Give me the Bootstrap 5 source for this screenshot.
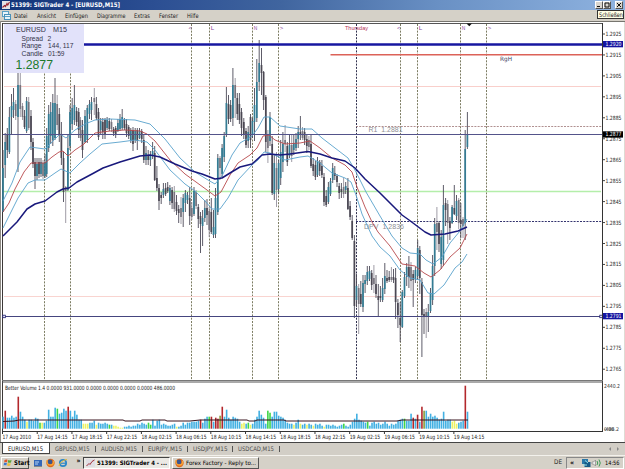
<!DOCTYPE html>
<html lang="de">
<head>
  <meta charset="UTF-8" />
  <meta name="viewport" content="width=device-width, initial-scale=1.0"/>
  <title>SIGTrader 4 - [EURUSD,M15]</title>

  <!-- Bootstrap 5 -->
  <link href="https://cdn.jsdelivr.net/npm/bootstrap@5.3.3/dist/css/bootstrap.min.css" rel="stylesheet">
  <script src="https://cdn.jsdelivr.net/npm/bootstrap@5.3.3/dist/js/bootstrap.bundle.min.js"></script>

  <style>
    body {
      width: 625px;
      height: 469px;
      overflow: hidden;
      background: #d5d1c8;
      color: #222;
      font-family: "DejaVu Sans Condensed", "DejaVu Sans", sans-serif;
      font-size: 5.7px;
      line-height: 1;
      white-space: nowrap;
    }

    svg {
      display: block;
      flex: none;
      overflow: visible;
    }

    .title-bar {
      height: 10px;
      padding: 0 2px;
      background: linear-gradient(90deg, #123378 0%, #2c4f93 25%, #40659f 45%, #6990c4 70%, #8fb3e0 100%);
      color: #fff;
      font-size: 6.3px;
      font-weight: bold;
    }

    .win-btn {
      width: 8px;
      height: 7.5px;
      background: #d8d4cc;
      border: 1px solid;
      border-color: #fff #555 #555 #fff;
    }

    .menu-bar {
      height: 11px;
      padding-left: 2px;
      background: #d5d1c8;
    }

    .menu-items {
      gap: 9px;
      margin-left: 3px;
    }

    .close-tip {
      right: 1px;
      top: 0;
      width: 27px;
      height: 9px;
      background: #ffffe6;
      border: 1px solid #333;
      color: #222;
      z-index: 2;
    }

    .tab-row {
      height: 13px;
      border-top: 1px solid #444;
      background: #d2cec6;
      color: #4c4c4c;
      padding-left: 2px;
    }

    .chart-tab {
      height: 11px;
      padding: 0 5px;
    }

    .chart-tab.active {
      width: 48px;
      background: #fff;
      color: #111;
      border: 1px solid #444;
      border-top: 0;
    }

    .tab-sep {
      width: 1px;
      height: 6px;
      background: #555;
    }

    .task-bar {
      height: 14px;
      border-top: 1px solid #f3f1ec;
      padding: 0 1px;
      background: #d5d1c8;
    }

    .task-btn {
      height: 12px;
      border: 1px solid;
      border-color: #fff #555 #555 #fff;
      padding: 0 2px;
      gap: 2px;
      color: #111;
    }

    .task-btn.pressed {
      border-color: #444 #fff #fff #444;
      background: #ebe9e4;
      font-weight: bold;
    }

    .tray {
      width: 58px;
      height: 12px;
      border: 1px solid;
      border-color: #888 #fff #fff #888;
      gap: 4px;
      padding: 0 3px;
    }
  </style>
</head>
<body class="d-flex flex-column">

  <!-- Titelleiste -->
  <div class="title-bar d-flex align-items-center">
    <svg width="8" height="8" viewBox="0 0 8 8"><rect width="8" height="8" fill="#e4e2e6"/><path d="M0.5 6.5L2.5 4.5 3.5 5.5 5 2.5 5.8 4 7.5 1" fill="none" stroke="#9c2430" stroke-width="1.1"/></svg>
    <svg width="114" height="10"><text x="1" y="7.2" textLength="109" lengthAdjust="spacingAndGlyphs" fill="#fff">51399: SIGTrader 4 - [EURUSD,M15]</text></svg>
    <div class="ms-auto d-flex">
      <div class="win-btn"><svg width="6" height="6"><path d="M1 4.5H4" stroke="#111"/></svg></div>
      <div class="win-btn"><svg width="6" height="6"><path d="M1 1H5V5H1Z" fill="none" stroke="#111"/></svg></div>
      <div class="win-btn ms-1"><svg width="6" height="6"><path d="M1 1L5 5M5 1L1 5" stroke="#111"/></svg></div>
    </div>
  </div>

  <!-- Menü -->
  <div class="menu-bar d-flex align-items-center position-relative">
    <svg width="9" height="9" viewBox="0 0 9 9"><rect x="0.5" y="0.5" width="6" height="5" fill="#e9f5fb" stroke="#5ba0c4"/><rect x="2.5" y="3.5" width="6" height="5" fill="#e9f5fb" stroke="#4a90b8"/><path d="M3 5.5H8" stroke="#5ba0c4"/></svg>
    <div class="menu-items d-flex" id="menuItems"></div>
    <div class="close-tip position-absolute d-flex align-items-center justify-content-center" id="closeTip"></div>
  </div>

  <!-- Chart -->
  <svg id="chart" width="625" height="421" viewBox="0 21 625 421"></svg>

  <!-- Chart-Tabs -->
  <div class="tab-row d-flex align-items-start" id="tabRow"></div>

  <!-- Taskleiste -->
  <div class="task-bar d-flex align-items-center">
    <div class="task-btn d-flex align-items-center fw-bold" style="width: 28px">
      <svg width="8" height="9" viewBox="0 0 8 9"><path d="M0.5 2Q2 1 3.5 1.8L3 4.3Q1.7 3.6 0.2 4.4Z" fill="#e2562a"/><path d="M4.2 2Q5.8 2.8 7.6 2L7 4.5Q5.4 5.1 3.8 4.4Z" fill="#5aa53c"/><path d="M0 5Q1.5 4.3 2.9 5L2.3 7.4Q1 6.8-0.4 7.4Z" fill="#3c76cc"/><path d="M3.6 5.1Q5.2 5.8 6.8 5.2L6.2 7.6Q4.6 8.2 3 7.5Z" fill="#ecbd35"/></svg>
      <svg width="16" height="10"><text x="0" y="7.4" font-size="6.4" textLength="15.5" lengthAdjust="spacingAndGlyphs">Start</text></svg>
    </div>
    <svg width="54" height="12" viewBox="0 0 54 12">
      <rect x="5" y="3" width="8" height="6" fill="#3468b8"/><path d="M6 5H10M6 7H9" stroke="#b7d5f5"/><path d="M5 9.5H13" stroke="#86888c"/>
      <g id="firefox"><circle cx="21.5" cy="6" r="4.2" fill="#df6a1c"/><circle cx="21" cy="5" r="2.4" fill="#3a568f"/><path d="M18 3Q17.5 8 21.5 8Q25 8 24.5 4" fill="none" stroke="#f6a63a" stroke-width="1.3"/></g>
      <circle cx="34" cy="6" r="3.2" fill="none" stroke="#2b87c9" stroke-width="1.7"/><path d="M31.5 6.2H37" stroke="#2b87c9" stroke-width="1.2"/><path d="M30 9Q31 4 38 2.3" fill="none" stroke="#e5b93b"/>
      <text x="47.500" y="6" font-size="7" font-weight="bold">»</text>
    </svg>
    <div class="task-btn pressed d-flex align-items-center" style="width: 87px">
      <svg width="9" height="8" viewBox="0 0 9 8"><rect width="9" height="8" fill="#e0dfe4"/><path d="M0.5 7L3 4.5 4 5.5 6 2.5 8.5 1" fill="none" stroke="#a4303a"/></svg>
      <svg width="72" height="10"><text x="0" y="7.2" font-size="6" textLength="70" lengthAdjust="spacingAndGlyphs">51399: SIGTrader 4 - ...</text></svg>
    </div>
    <div class="task-btn d-flex align-items-center" style="width: 87px; margin-left: 2px">
      <svg width="9" height="10" viewBox="17 1 9 10"><use href="#firefox"/></svg>
      <svg width="72" height="10"><text x="0" y="7.2" font-size="6" textLength="70" lengthAdjust="spacingAndGlyphs">Forex Factory - Reply to...</text></svg>
    </div>
    <span class="ms-auto" style="font-size: 6.3px">DE</span>
    <div class="tray d-flex align-items-center" style="margin-left: 4px">
      <svg width="31" height="10" viewBox="0 0 31 10"><text x="0" y="7" font-size="7" font-weight="bold">«</text><rect x="12" y="1" width="6" height="5" fill="#2a78a8"/><rect x="14.5" y="4" width="6" height="5" fill="#175a86"/><path d="M13 7H17M15 2.5L18 5" stroke="#8fe0e8"/><path d="M22 4H23.5L25.5 2V8L23.5 6H22Z" fill="#eee" stroke="#777" stroke-width="0.6"/><path d="M27 3Q28.5 5 27 7M29 1.5Q31.5 5 29 8.5" fill="none" stroke="#3d9b55"/></svg>
      <svg width="16" height="10"><text x="0" y="7" font-size="6" textLength="14.5" lengthAdjust="spacingAndGlyphs">14:56</text></svg>
    </div>
  </div>

  <script>
    const label = (text, width) =>
      `<svg width="${width}" height="9"><text x="0" y="6.7" fill="currentColor" font-size="6.2" textLength="${width}" lengthAdjust="spacingAndGlyphs">${text}</text></svg>`;

    const menu = [['Datei', 13.5], ['Ansicht', 19], ['Einfügen', 23], ['Diagramme', 28.5], ['Extras', 16], ['Fenster', 19], ['Hilfe', 11.5]];
    document.getElementById('menuItems').innerHTML = menu.map(m => label(m[0], m[1])).join('');
    document.getElementById('closeTip').innerHTML = label('Schließen', 24);

    const tabs = [['EURUSD,M15', 35], ['GBPUSD,M15', 34.5], ['AUDUSD,M15', 36], ['EURJPY,M15', 34], ['USDJPY,M15', 34.5], ['USDCAD,M15', 36]];
    document.getElementById('tabRow').innerHTML = tabs.map((tab, i) =>
      `<div class="chart-tab d-flex align-items-center ${i === 0 ? 'active' : ''}">${label(tab[0], tab[1])}</div>` +
      (i > 0 ? '<div class="tab-sep align-self-center"></div>' : '')).join('') +
      '<svg class="ms-auto me-1 align-self-center" width="14" height="8"><path d="M4 2L2 4 4 6ZM10 2L12 4 10 6Z" fill="#888"/></svg>';

    // Kerzen: x, Hoch, Tief, Körper oben, Körper unten, Typ (u = steigend, d = fallend, g = grau)
    const candles = `
      3 150 212 168 212 u;5.2 133 178 142 165 u;7.3 128 158 134 150 d;9.4 107 154 117 152 u;11.5 94 135 106 117 u;13.5 88 118 102 110 u;15.7 100 120 104 116 g;18 73 172 85 117 u;20.3 73 117 85 109 g;22.5 103 120 106 117 g;24.5 110 129 116 127 d;26.6 97 133 101 131 u;28.7 97 130 102 128 g;31 110 150 116 142 d;33 138 168 142 164 d;35 158 189 162 176 d;37 158 180 164 176 u;39 158 178 162 174 d;41 158 177 162 174 u;43 160 179 163 176 g;45 154 178 162 176 u;46.7 128 177 136 174 u;48.7 105 152 114 148 u;50.7 102 144 112 136 u;52.8 94 146 103 140 u;55 78 140 103 138 u;57.2 95 130 104 125 g;59.3 108 142 114 134 d;61.4 122 165 134 158 d;63.5 152 202 158 192 d;65.7 186 223 187 191 g;67.9 134 191 148 190 u;70 105 150 112 146 u;72.2 98 130 108 124 u;74.4 85 125 105 120 u;76.6 107 126 111 122 d;78.7 108 138 112 130 d;80.5 117 141 120 138 g;82.5 120 158 130 150 d;85 110 143 116 142 u;87.3 105 143 108 140 u;89.5 100 119 104 114 u;91.5 97 120 102 110 u;94.3 88 115 98 102 g;96.4 97 120 104 118 d;98.5 108 140 112 137 d;100.7 118 134 121 130 u;102.8 118 139 122 132 d;105 118 139 120 134 d;107.1 117 130 120 128 u;109.3 118 131 121 129 d;111.5 119 132 122 129 g;113.6 127 136 129 133 d;115.7 126 138 128 135 d;117.9 119 132 123 131 u;120 114 131 119 129 u;122.2 109 130 117 128 u;124.4 118 130 120 128 d;126.5 119 137 124 133 d;128.7 125 139 127 136 d;130.8 128 143 130 140 u;133 127 151 130 144 d;135.2 128 143 131 140 u;137.3 128 150 130 141 d;139.5 128 139 131 138 u;141.7 129 143 131 139 d;143.8 135 163 140 160 d;146 146 165 153 160 u;148.2 150 165 155 160 d;150.4 151 166 155 160 u;152.6 142 159 151 156 u;154.7 146 181 153 180 d;156.9 166 191 178 188 d;159 184 210 188 201 d;161.2 192 204 195 198 d;163.4 183 198 189 195 u;165.6 183 196 188 194 d;167.7 182 193 187 191 d;169.9 185 205 188 201 u;172.1 187 209 190 203 d;174.3 186 212 192 209 g;176.5 195 215 202 211 d;178.7 205 223 209 213 d;181 197 224 208 217 g;183.2 194 227 198 212 u;185.4 190 212 193 203 u;187.5 192 204 195 200 u;189.7 187 225 198 216 d;191.8 202 220 208 217 g;194 187 216 191 214 u;196.1 190 209 192 206 g;198.3 204 228 207 219 d;200.5 212 253 216 224 d;202.6 210 246 218 226 u;204.8 200 222 208 218 u;207 199 225 208 215 d;209.2 207 237 211 230 g;211.3 198 234 212 232 d;213.5 210 238 227 235 u;215.5 188 238 198 234 u;217.8 154 215 158 212 u;220 156 180 158 168 g;222.1 144 178 148 174 u;224.2 132 162 136 157 u;226.4 87 137 103 134 u;228.5 95 124 104 119 d;230.6 100 122 105 119 d;232.9 68 126 85 118 u;235.2 78 118 85 98 g;237.3 93 120 98 114 d;239.4 93 124 104 120 d;241.5 108 136 112 128 d;243.8 118 139 122 134 d;246 128 148 131 145 d;248.2 126 148 132 141 u;250.5 114 148 117 140 d;252.5 118 138 121 134 u;254.5 88 141 105 122 u;256.8 59 122 82 118 u;259.2 40 91 63 82 u;261.5 48 95 65 73 d;263.6 71 110 72 100 d;265.8 95 152 97 142 d;267.9 130 163 134 148 g;270 112 146 117 141 u;272.2 136 195 144 193 d;274.3 154 200 163 194 u;276.5 152 207 168 190 g;278.6 160 194 163 189 u;280.7 140 185 152 178 u;282.9 132 172 144 162 u;285.1 125 152 140 144 g;287.3 142 166 146 162 d;289.5 134 158 145 156 u;291.7 134 162 145 156 g;293.8 134 155 143 150 u;296 133 151 139 148 u;298.2 126 148 132 139 u;300.4 116 140 132 134 d;302.5 127 140 131 138 g;304.6 128 145 132 140 d;306.8 134 153 139 146 d;308.9 136 150 140 147 g;311 134 168 144 166 d;313.2 158 176 164 171 d;315.4 161 180 165 177 d;317.5 157 177 161 175 u;319.7 160 176 162 171 d;321.9 160 178 166 175 d;324 173 206 177 202 d;326.2 190 207 196 205 d;328.4 182 204 187 202 u;330.5 178 196 181 194 u;332.7 163 183 168 180 u;334.8 166 180 173 176 d;337 174 187 176 182 d;339.2 183 199 186 193 d;341.4 183 198 189 192 d;343.6 178 198 187 194 g;345.7 182 194 186 190 u;347.9 178 210 188 209 d;350.1 201 220 206 217 d;352.2 215 240 221 238 d;354.4 235 318 241 306 d;356.5 274 307 286 300 u;358.7 284 334 288 304 g;360.8 281 307 294 304 d;363 275 312 283 307 u;365.1 275 293 280 284 u;367.3 266 285 272 281 u;369.5 266 281 271 279 u;371.7 270 290 273 285 d;373.9 265 293 278 284 g;376 275 298 284 294 d;378.3 284 316 296 300 d;380.4 286 302 296 298 d;382.6 278 302 288 300 u;384.8 263 294 276 289 u;387 270 283 278 281 d;389.2 271 282 277 280 d;391.4 267 282 277 280 g;393.5 269 283 277 280 d;395.6 268 319 278 302 d;397.9 299 328 303 315 d;400.2 302 342 318 325 d;402.3 290 328 292 327 u;404.5 272 298 277 296 u;406.7 263 286 267 277 u;408.9 256 288 267 277 d;411 262 291 267 281 g;413.2 270 307 274 280 d;415.4 267 283 270 279 u;417.7 240 280 248 276 u;419.8 246 294 250 278 d;421.9 278 357 282 315 d;424 309 334 314 316 d;426.2 308 338 312 317 g;428.3 304 332 312 316 u;430.5 288 313 293 311 u;432.6 255 305 266 300 u;434.7 218 276 224 266 u;436.9 207 250 223 232 g;439 221 252 223 244 d;441.2 230 269 237 264 u;443.4 185 266 205 260 u;445.6 198 226 203 210 d;447.7 200 244 204 223 g;449.9 217 240 222 228 d;452.1 205 224 207 223 u;454.3 185 215 208 214 d;456.5 195 220 201 216 u;458.7 198 229 200 223 g;460.8 203 238 220 224 d;463 217 238 219 226 g;465.2 130 240 149 223 u;467.4 112 149 134 147 u`;

    const averages = [
      ['#58a2cc', 0.9, '3,201 12,183 20,162 30,147 45,149 52,142 60,134 66,138 75,130 85,124 95,120 110,119 135,120 150,124 165,139 180,158 195,172 208,180 215,184 222,176 232,155 240,143 252,136 258,128 264,117 270,117 280,126 300,129 312,129 322,138 335,148 348,158 356,172 366,192 380,216 392,236 402,248 410,253 420,254 426,260 433,264 442,257 450,243 460,231 467,219'],
      ['#58a2cc', 0.9, '3,228 10,214 18,198 28,183 35,180 45,180 55,173 61,169 70,173 80,163 90,154 102,144 120,142 135,140 147,142 155,150 170,170 185,184 195,191 205,201 212,209 220,209 228,198 238,180 252,165 258,160 264,152 270,153 285,160 300,157 308,156 320,163 332,173 345,178 351,182 356,195 362,214 372,236 380,247 390,256 400,270 410,278 420,280 428,293 434,294 444,285 455,268 462,262 467,254'],
      ['#b8484c', 0.9, '3,212 9,203 15,189 24,172 31,163 45,163 52,157 59,152 63,151 68,156 75,150 84,144 95,133 110,131 125,130 140,131 147,134 155,141 170,160 185,174 196,182 207,190 215,196 221,192 230,175 238,163 250,155 257,148 263,136 269,135 275,140 285,144 300,143 310,141 320,148 332,158 345,165 352,172 357,187 365,207 372,222 378,232 390,246 398,258 402,264 415,266 424,273 431,277 440,270 450,257 460,248 467,234'],
      ['#19197c', 1.5, '3,236 10,229 17,222 27,209 35,204 45,201 57,192 63,189 69,188 77,182 92,174 103,168 120,162 140,156 150,155 160,157 175,164 192,171 202,174 215,179 222,178 230,173 240,167 252,164 262,155 270,154 280,155 290,154 308,151.5 320,154 332,158 345,161 355,168 365,179 380,193 395,208 402,215 409,220 417,226 425,232 431,235 445,234 458,231 467,227']
    ];

    // Volumen: Farbe + Höhe, ein Eintrag pro Kerze
    const volumes = `b12 r18 b11 b11 b13 b11 b12 r32 b17 b12 b9 y7 b9 b9 b8 b11 b10 g6 y6 b6 b8 b19 b12 b12 b21 g20 b15 b16 b20 b18 r22 b18 b12 b18 b14 b9 b9 y5 y5 y5 b6 b6 b8 y4 b6 b5 b5 b6 b5 g4 b4 y3 y3 y2 y1 y1 b2 b2 b3 b2 b3 b3 b5 b4 b6 b5 b4 g6 g4 b9 b3 b8 b9 b4 b5 b4 b3 b3 b4 b5 y2 b2 b3 b6 b4 b6 b6 b7 b7 b7 b8 r9 b6 b10 b12 g12 r12 b7 r11 r10 o13 r22 b12 b19 b11 b9 b12 b11 b10 b7 y5 y6 b5 g6 y4 b5 b9 b12 b18 b14 b11 b5 g18 g16 b12 b17 b17 b13 b12 b11 b9 b6 b5 b5 y4 b6 b9 y5 b4 b5 y4 b5 b4 y3 b5 b4 b5 b3 y2 b4 b4 b3 b4 b3 b2 b3 b4 g5 b3 b2 b4 b7 b10 b15 b9 b8 b7 b6 g7 b3 b6 b7 b5 b6 b4 b5 b7 b5 b3 b5 b4 b5 b8 b9 b10 g10 b8 b8 b15 r11 b10 r14 b7 r22 o18 b18 b12 b15 b12 b13 b11 b9 b10 b17 b8 b9 b9 y7 y8 y5 b6 b7 b8 r43 b17`.split(' ');

    let out = '';
    const rect = (x, y, w, h, fill) => out += `<rect x="${x}" y="${y}" width="${w}" height="${h}" fill="${fill}"/>`;
    const line = (x1, y1, x2, y2, color, width = 1, dash = '') =>
      out += `<line x1="${x1}" y1="${y1}" x2="${x2}" y2="${y2}" stroke="${color}" stroke-width="${width}" stroke-dasharray="${dash}"/>`;
    const text = (x, y, str, width, size, fill, extra = '') =>
      out += `<text x="${x}" y="${y}" textLength="${width}" lengthAdjust="spacingAndGlyphs" font-size="${size}" fill="${fill}" style="white-space: pre" ${extra}>${str}</text>`;
    const arial = 'font-family="Liberation Sans, sans-serif"';

    // Rahmen und Fläche
    rect(0, 21, 625, 421, '#fff');
    line(0, 21.5, 625, 21.5, '#77756f');
    line(2, 23.5, 603, 23.5, '#555');
    line(0.5, 21, 0.5, 442, '#8d8a84');
    line(2.5, 23, 2.5, 432, '#3c3838');
    line(624.5, 22, 624.5, 442, '#dedbd4');

    // Session-Linien
    [44.5, 70.5, 191.5, 209.5, 252.5, 278.5, 400.5, 417.5, 460.5, 486.5].forEach(x => line(x, 24, x, 380, '#7c7c62', 1, '2 1.3'));
    line(356.5, 24, 356.5, 380, '#30304e', 1, '2 1.3');

    // Preislinien
    line(4, 86.5, 601, 86.5, '#f9cfcb');
    line(4, 296.5, 601, 296.5, '#f9d4d0');
    line(3, 191.5, 601, 191.5, '#b4eeaa', 1.3);
    line(356, 126.5, 602, 126.5, '#9c7474', 0.8, '2 1.2');
    line(356, 221.5, 602, 221.5, '#33336e', 1, '2 1.2');

    text(368.5, 132, 'R1  1.2881', 34, 7, '#8e8e94', arial);
    text(364, 228.5, 'DPV  1.2836', 40, 7, '#8e8e94', arial);

    candles.split(';').forEach(row => {
      const c = row.trim().split(' ');
      const wick = c[5] === 'g' ? '#94919c' : '#4c4a58';
      const body = { u: '#337c94', d: '#4b4853', g: '#77747e' }[c[5]];
      line(c[0], c[1], c[0], c[2], wick, 0.9);
      rect(c[0] - 0.85, c[3], 1.7, c[4] - c[3], body);
    });

    averages.forEach(a => out += `<polyline points="${a[2]}" fill="none" stroke="${a[0]}" stroke-width="${a[1]}" stroke-linejoin="round"/>`);

    line(3, 134.5, 602, 134.5, '#53538a');
    line(3, 316.5, 602, 316.5, '#45457f');
    line(84, 44.5, 602, 44.5, '#1717a0', 2.4);
    line(330.5, 54.7, 602, 54.7, '#dc6258', 1.4);
    out += '<rect x="2.8" y="315.2" width="2.5" height="2.5" fill="#fff" stroke="#191970" stroke-width="0.8"/>';
    out += '<rect x="599.8" y="315.2" width="2.5" height="2.5" fill="#fff" stroke="#191970" stroke-width="0.8"/>';
    out += '<path d="M466.5 23.5H472L469.3 26.3Z" fill="#111"/>';

    // Session-Kürzel
    [[188.5, '&lt;'], [210.8, 'L'], [253.7, 'N'], [279.7, '&gt;'], [397, '&lt;'], [418.8, 'L'], [461.7, 'N'], [487.8, '&gt;']]
      .forEach(s => text(s[0], 30, s[1], 3.5, 5, '#8a4a9c', arial));
    text(345, 29.8, 'Thursday', 23, 5.8, '#b33055', arial);
    text(500, 60.5, 'RgH', 12, 6, '#3c3c5c');

    // Infofeld
    rect(4, 24, 80, 49, '#e2e2fa');
    text(16, 32, 'EURUSD', 30, 7.6, '#333348', arial);
    text(53, 32, 'M15', 14, 7.6, '#333348', arial);
    text(21.5, 40.5, 'Spread', 21.5, 6.7, '#333348', arial);
    text(47.5, 40.5, '2', 3.7, 6.7, '#333348', arial);
    text(21.5, 48, 'Range', 20, 6.7, '#333348', arial);
    text(48, 48, '144, 117', 25.5, 6.7, '#333348', arial);
    text(21.5, 55.5, 'Candle', 21.5, 6.7, '#333348', arial);
    text(48, 55.5, '01:59', 16.5, 6.7, '#333348', arial);
    text(15.5, 69, '1.2877', 37.5, 13, '#1c7a2c', arial);

    // Preisachse
    line(602.5, 23, 602.5, 432, '#333');
    for (let i = 0; i < 17; i++) {
      const y = 34 + i * 20.95;
      line(603, y, 605, y, '#444');
      text(605.5, y + 2, (1.2925 - i * 0.001).toFixed(4), 16, 5.7, '#222');
    }
    [[44, '1.2920', '#1414a0'], [134.3, '1.2877', '#000'], [316, '1.2791', '#1414a0']].forEach(p => {
      rect(603, p[0] - 3, 20, 6.3, p[2]);
      text(605.5, p[0] + 2, p[1], 16, 5.7, '#fff');
    });

    // Volumenfenster
    line(2, 380.5, 603, 380.5, '#777');
    line(2, 382, 603, 382, '#555');
    text(5, 389.5, 'Better Volume 1.4 0.0000 931.0000 0.0000 0.0000 0.0000 0.0000 486.0000', 170, 5.8, '#222');
    const colors = { b: '#42b0e2', r: '#b3282c', g: '#3fd548', y: '#ebf264', o: '#8a9c3c' };
    volumes.forEach((v, i) => rect(2.3 + i * 464.4 / (volumes.length - 1), 428.7 - v.slice(1), 1.6, v.slice(1), colors[v[0]]));
    out += '<polyline points="3,421.5 14,421 19,420 123,420 125,421 140,421 142,420 165,420 167,421 190,421 200,420 247,420 249,421 255,421 257,420 284,420 286,421 397,421 402,420 468,420" fill="none" stroke="#38121c" stroke-width="1"/>';
    line(2, 431.5, 603, 431.5, '#333');
    text(604, 387.5, '2440.2', 16, 5.4, '#333');
    text(604, 430.5, '0.00', 10, 5.2, '#222');
    text(604, 430.5, '-486.2', 15, 5.2, '#333');

    // Zeitachse
    ['17 Aug 2010', '17 Aug 14:15', '17 Aug 18:15', '17 Aug 22:15', '18 Aug 02:15', '18 Aug 06:15', '18 Aug 10:15', '18 Aug 14:15', '18 Aug 18:15', '18 Aug 22:15', '19 Aug 02:15', '19 Aug 06:15', '19 Aug 10:15', '19 Aug 14:15'].forEach((d, i) => {
      const x = 2.5 + i * 34.72;
      line(x, 432, x, 434, '#333');
      text(x, 438.8, d, i === 0 ? 28.5 : 30.5, 5.8, '#222');
    });

    document.getElementById('chart').innerHTML = out;
  </script>

</body>
</html>
